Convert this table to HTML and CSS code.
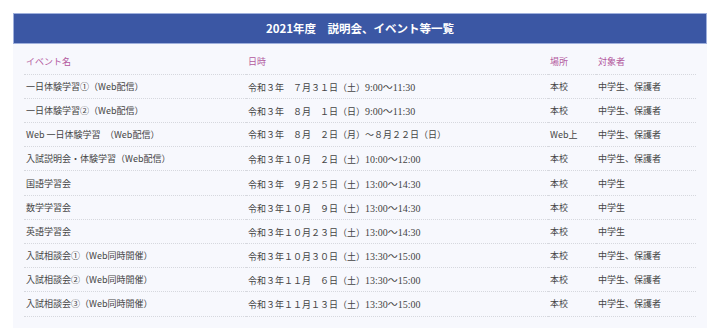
FILE: index.html
```html
<!DOCTYPE html>
<html lang="ja">
<head>
<meta charset="utf-8">
<link rel="stylesheet" href="styles.css">
</head>
<body>
<section class="panel">
  <h2 class="panel-title">2021年度　説明会、イベント等一覧</h2>
  <div class="panel-body">
    <table class="events">
      <colgroup>
        <col class="c-name"><col class="c-date"><col class="c-place"><col class="c-target">
      </colgroup>
      <thead>
        <tr><th>イベント名</th><th>日時</th><th>場所</th><th>対象者</th></tr>
      </thead>
      <tbody>
        <tr><td>一日体験学習①（Web配信）</td><td class="date">令和３年　７月３１日（土）<span class="time">9:00～11:30</span></td><td>本校</td><td>中学生、保護者</td></tr>
        <tr><td>一日体験学習②（Web配信）</td><td class="date">令和３年　８月　１日（日）<span class="time">9:00～11:30</span></td><td>本校</td><td>中学生、保護者</td></tr>
        <tr><td>Web 一日体験学習　（Web配信）</td><td class="date">令和３年　８月　２日（月）～８月２２日（日）</td><td>Web上</td><td>中学生、保護者</td></tr>
        <tr><td>入試説明会・体験学習（Web配信）</td><td class="date">令和３年１０月　２日（土）<span class="time">10:00～12:00</span></td><td>本校</td><td>中学生、保護者</td></tr>
        <tr><td>国語学習会</td><td class="date">令和３年　９月２５日（土）<span class="time">13:00～14:30</span></td><td>本校</td><td>中学生</td></tr>
        <tr><td>数学学習会</td><td class="date">令和３年１０月　９日（土）<span class="time">13:00～14:30</span></td><td>本校</td><td>中学生</td></tr>
        <tr><td>英語学習会</td><td class="date">令和３年１０月２３日（土）<span class="time">13:00～14:30</span></td><td>本校</td><td>中学生</td></tr>
        <tr><td>入試相談会①（Web同時開催）</td><td class="date">令和３年１０月３０日（土）<span class="time">13:30～15:00</span></td><td>本校</td><td>中学生、保護者</td></tr>
        <tr><td>入試相談会②（Web同時開催）</td><td class="date">令和３年１１月　６日（土）<span class="time">13:30～15:00</span></td><td>本校</td><td>中学生、保護者</td></tr>
        <tr><td>入試相談会③（Web同時開催）</td><td class="date">令和３年１１月１３日（土）<span class="time">13:30～15:00</span></td><td>本校</td><td>中学生、保護者</td></tr>
      </tbody>
    </table>
  </div>
</section>
</body>
</html>
```

FILE: styles.css
```css
html, body {
  margin: 0;
  padding: 0;
  background: #ffffff;
}
body {
  padding: 13px 11px 0 13px;
  font-family: "Noto Sans CJK JP", "Noto Sans", sans-serif;
  color: #444;
}
.panel {
  width: 694px;
  background: #f7f8fd;
}
.panel-title {
  margin: 0;
  height: 31px;
  box-sizing: border-box;
  border: 1px solid #9fb0dc;
  background: #3b57a4;
  color: #fff;
  font-size: 11.5px;
  font-weight: bold;
  line-height: 29px;
  text-align: center;
}
.panel-body {
  padding: 6px 11px 11px 11px;
}
.events {
  width: 672px;
  border-collapse: collapse;
  table-layout: fixed;
  font-size: 9px;
}
.c-name { width: 222px; }
.c-date { width: 302px; }
.c-place { width: 48px; }
.c-target { width: 100px; }
.events th, .events td {
  height: 24.2px;
  box-sizing: border-box;
  padding: 0 0 0 2px;
  text-align: left;
  font-weight: normal;
  border-bottom: 1px dotted #d6d8de;
  white-space: nowrap;
  vertical-align: middle;
}
.events th {
  color: #b3599d;
}
.events td.date .time {
  font-family: "Liberation Serif", "Noto Sans CJK JP", serif;
  font-size: 10px;
}
```
